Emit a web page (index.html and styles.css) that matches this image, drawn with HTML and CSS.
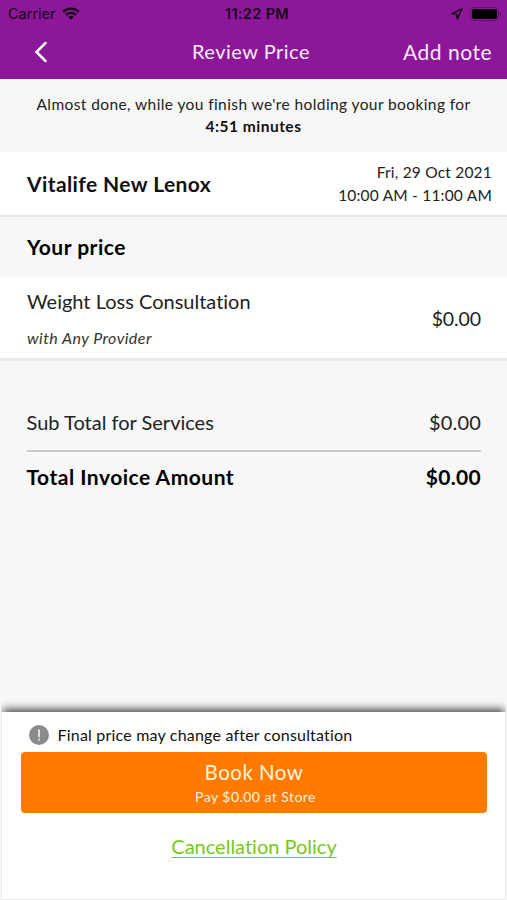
FILE: index.html
```html
<!DOCTYPE html>
<html lang="en">
<head>
<meta charset="utf-8">
<title>Review Price</title>
<link rel="stylesheet" href="styles.css">
</head>
<body>
<div class="screen">
  <header class="header">
    <div class="status">
      <div class="status-side"><span class="carrier">Carrier</span>
        <svg viewBox="0 0 18 13" width="18" height="13" fill="none" stroke="currentColor" stroke-width="2.4"><path d="M1.300 4.800a11 11 0 0 1 15.400 0"/><path d="M4 7.900a7.200 7.200 0 0 1 10 0"/><path d="M9 12.800L6.200 10a4 4 0 0 1 5.600 0z" fill="currentColor" stroke="none"/></svg>
      </div>
      <span class="clock">11:22 PM</span>
      <div class="status-side status-end">
        <svg viewBox="0 0 12 12" width="12" height="12" fill="none" stroke="currentColor" stroke-width="1.5" stroke-linejoin="round"><path d="M11 1L1 5.600l4.700.7.6 4.700z"/></svg>
        <svg viewBox="0 0 32 14" width="32" height="14"><rect x=".5" y=".5" width="28" height="13" rx="4" fill="none" stroke="#000" stroke-opacity=".3"/><rect x="2" y="2" width="25" height="10" rx="2.200"/><path d="M30 5c1.800.6 1.800 3.400 0 4z" fill-opacity=".45"/></svg>
      </div>
    </div>
    <nav class="nav">
      <svg class="back" viewBox="0 0 14 22" width="14" height="22" fill="none" stroke="#fff" stroke-width="2.5" stroke-linecap="round"><path d="M11.500 2L2.500 11l9 9"/></svg>
      <h1 class="title">Review Price</h1>
      <span class="add">Add note</span>
    </nav>
  </header>
  <section class="notice">
    <span class="notice-text">Almost done, while you finish we're holding your booking for</span>
    <strong class="notice-time">4:51 minutes</strong>
  </section>
  <section class="venue">
    <h2 class="venue-name">Vitalife New Lenox</h2>
    <div class="when"><span>Fri, 29 Oct 2021</span><span>10:00 AM - 11:00 AM</span></div>
  </section>
  <h2 class="price-heading">Your price</h2>
  <section class="item">
    <div class="item-info"><span class="item-name">Weight Loss Consultation</span><em class="provider">with Any Provider</em></div>
    <span class="amount">$0.00</span>
  </section>
  <section class="totals">
    <div class="row subtotal"><span>Sub Total for Services</span><span class="sub-amount">$0.00</span></div>
    <div class="row total"><span>Total Invoice Amount</span><span class="total-amount">$0.00</span></div>
  </section>
  <footer class="footer">
    <div class="info">
      <svg viewBox="0 0 20 20" width="20" height="20"><circle cx="10" cy="10" r="10" fill="#8b8b8b"/><path d="M10 4.500v7.800M10 13.800v1.800" stroke="#fff" stroke-width="1.500"/></svg>
      <span class="info-text">Final price may change after consultation</span>
    </div>
    <button class="book"><span class="book-title">Book Now</span><span class="book-sub">Pay $0.00 at Store</span></button>
    <a class="policy">Cancellation Policy</a>
  </footer>
</div>
</body>
</html>
```

FILE: styles.css
```css
* { box-sizing: border-box; margin: 0; }
body { background: #f7f7f7; font-family: Lato, "Liberation Sans", sans-serif; font-variant-ligatures: none; color: #222; }
.screen { height: 900px; display: flex; flex-direction: column; overflow: hidden; white-space: nowrap; }

.header { height: 79px; background: #8c1899; flex: none; }
.status { height: 27px; display: grid; grid-template-columns: minmax(0, 1fr) auto minmax(0, 1fr); align-items: center; padding: 0 5px 0 8px; color: #16001a; font-family: Inter, sans-serif; }
.status-side { display: flex; align-items: center; gap: 6px; }
.status-end { justify-content: flex-end; gap: 7px; }
.carrier { font-size: 14.5px; }
.clock { font-size: 14.5px; font-weight: 600; letter-spacing: .35px; padding-left: 4px; }
.nav { height: 48px; display: grid; grid-template-columns: minmax(0, 1fr) auto minmax(0, 1fr); align-items: center; padding: 0 15px 0 10px; color: #fbeafc; }
.back { margin: 2px 0 0 24px; }
.title { font-size: 20px; font-weight: 400; letter-spacing: .5px; }
.add { font-size: 21px; letter-spacing: .5px; text-align: right; }

.notice { height: 73px; flex: none; padding-top: 14px; display: flex; flex-direction: column; align-items: center; font-size: 15.5px; letter-spacing: .4px; line-height: 22px; }
.notice-time { color: #111; letter-spacing: .5px; }

.venue { height: 65px; flex: none; display: flex; justify-content: space-between; align-items: center; padding: 0 15px 0 27px; background: #fff; border-bottom: 2px solid #e6e6e6; }
.venue-name { font-size: 21px; letter-spacing: .4px; color: #111; }
.when { display: flex; flex-direction: column; align-items: flex-end; padding-top: 1px; font-size: 15.5px; letter-spacing: .2px; line-height: 23px; }

.price-heading { height: 61px; flex: none; padding-left: 27px; font-size: 21px; letter-spacing: .5px; line-height: 59px; color: #000; }

.item { height: 83px; flex: none; display: flex; justify-content: space-between; align-items: center; padding: 0 26px 0 27px; background: #fff; border-bottom: 3px solid #e9e9e9; }
.item-info { display: flex; flex-direction: column; padding-top: 2px; line-height: 36px; }
.item-name { font-size: 20px; }
.provider { padding-top: 1px; margin-bottom: -1px; font-size: 16px; letter-spacing: .45px; color: #333; }
.amount { font-size: 19.5px; letter-spacing: -.1px; }

.totals { flex: 1; padding: 34px 26px 0 26.5px; }
.row { display: flex; justify-content: space-between; align-items: center; padding-bottom: 2px; font-size: 20px; }
.subtotal { height: 57px; border-bottom: 2px solid #cacaca; }
.sub-amount { letter-spacing: .2px; }
.total { height: 50px; font-size: 21px; letter-spacing: .5px; font-weight: 700; color: #000; }
.total-amount { letter-spacing: .3px; }

.footer { height: 188px; flex: none; background: #fff; margin: 0 1px; padding: 13px 18px 0 19px; border: 1px solid #ebebeb; border-top: 0; box-shadow: 0 -5px 8px -2px rgba(0,0,0,.7); clip-path: inset(-20px 0 0 0); display: flex; flex-direction: column; }
.info { height: 20px; display: flex; align-items: center; gap: 8.5px; padding-left: 8px; font-size: 16px; letter-spacing: .2px; color: #111; }
.info-text { padding-bottom: 2px; }
.book { margin-top: 7px; height: 61px; padding: 3px 0 0; border: 0; border-radius: 4px; background: #ff7a00; color: #fff3df; font-family: inherit; display: flex; flex-direction: column; align-items: center; justify-content: center; }
.book-title { font-size: 20.5px; letter-spacing: .5px; line-height: 25px; }
.book-sub { padding-left: 3px; font-size: 14px; letter-spacing: .45px; line-height: 23px; }
.policy { margin-top: 19px; align-self: center; font-size: 20px; line-height: 28px; color: #76c818; text-decoration: underline; text-underline-offset: 3px; text-decoration-thickness: 1px; text-decoration-skip-ink: none; }
```
